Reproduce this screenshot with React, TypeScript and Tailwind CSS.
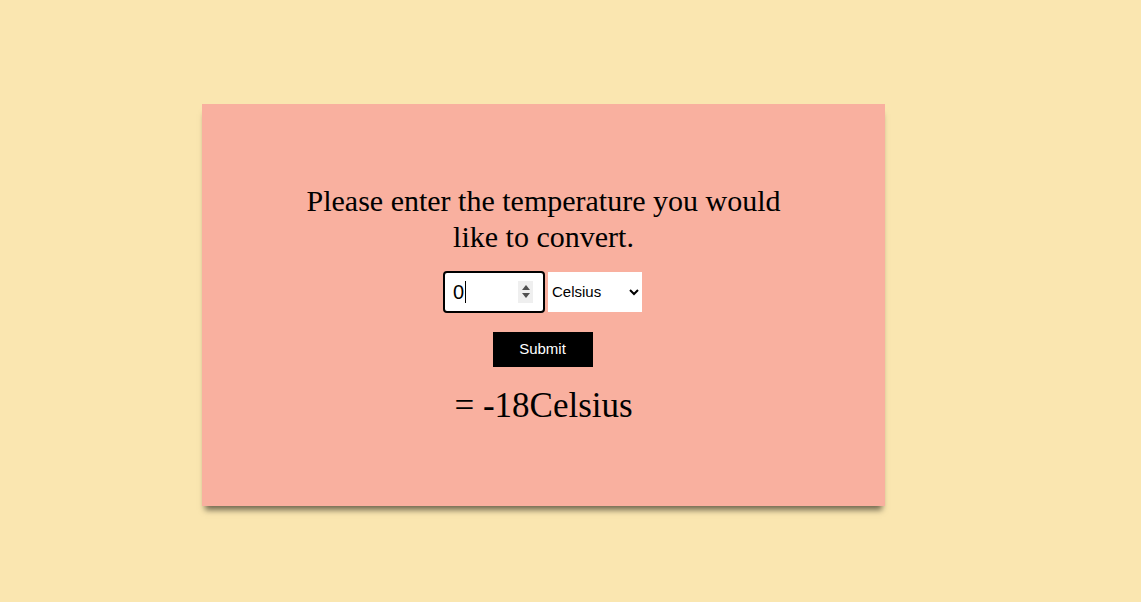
import React from 'react';

const Spinner = () => (
    <div className="flex h-[22px] w-[15px] flex-col items-center justify-center gap-[3px] bg-[#efefef]">
        <svg width="8" height="5" viewBox="0 0 8 5">
            <path d="M0 5 L4 0 L8 5 Z" fill="#505050" />
        </svg>
        <svg width="8" height="5" viewBox="0 0 8 5">
            <path d="M0 0 L4 5 L8 0 Z" fill="#505050" />
        </svg>
    </div>
);

export default function App() {
    return (
        <div className="min-h-[602px] w-full bg-[#fae6b0] pt-[104px] pl-[202px]">
            <div className="flex h-[402px] w-[683px] flex-col items-center justify-center bg-[#f9b09f] pb-[2px] shadow-[0_7px_6px_-3px_rgba(0,0,0,0.55)]">
                <h2 className="max-w-[520px] text-center font-['Liberation_Serif',serif] text-[30px] leading-[36px] text-black">
                    Please enter the temperature you would like to convert.
                </h2>

                <div className="mt-[16px] mr-[2px] flex items-center gap-[3px]">
                    <div className="flex h-[42px] w-[102px] items-center justify-between rounded-[4px] border-2 border-black bg-white pr-[10px] pl-[8px]">
                        <div className="flex items-center font-['Liberation_Sans',sans-serif] text-[20px] text-black">
                            0<span className="ml-[1px] inline-block h-[22px] w-[1px] bg-black" />
                        </div>
                        <Spinner />
                    </div>
                    <select
                        defaultValue="Celsius"
                        className="h-[40px] w-[94px] bg-white pl-0 font-['Liberation_Sans',sans-serif] text-[15px] text-black"
                    >
                        <option>Celsius</option>
                        <option>Fahrenheit</option>
                        <option>Kelvin</option>
                    </select>
                </div>

                <button className="mt-[19px] mr-[2px] h-[35px] w-[100px] bg-black font-['Liberation_Sans',sans-serif] text-[15px] text-white">
                    Submit
                </button>

                <p className="mt-[19px] font-['Liberation_Serif',serif] text-[35px] leading-[40px] text-black">= -18Celsius</p>
            </div>
        </div>
    );
}
